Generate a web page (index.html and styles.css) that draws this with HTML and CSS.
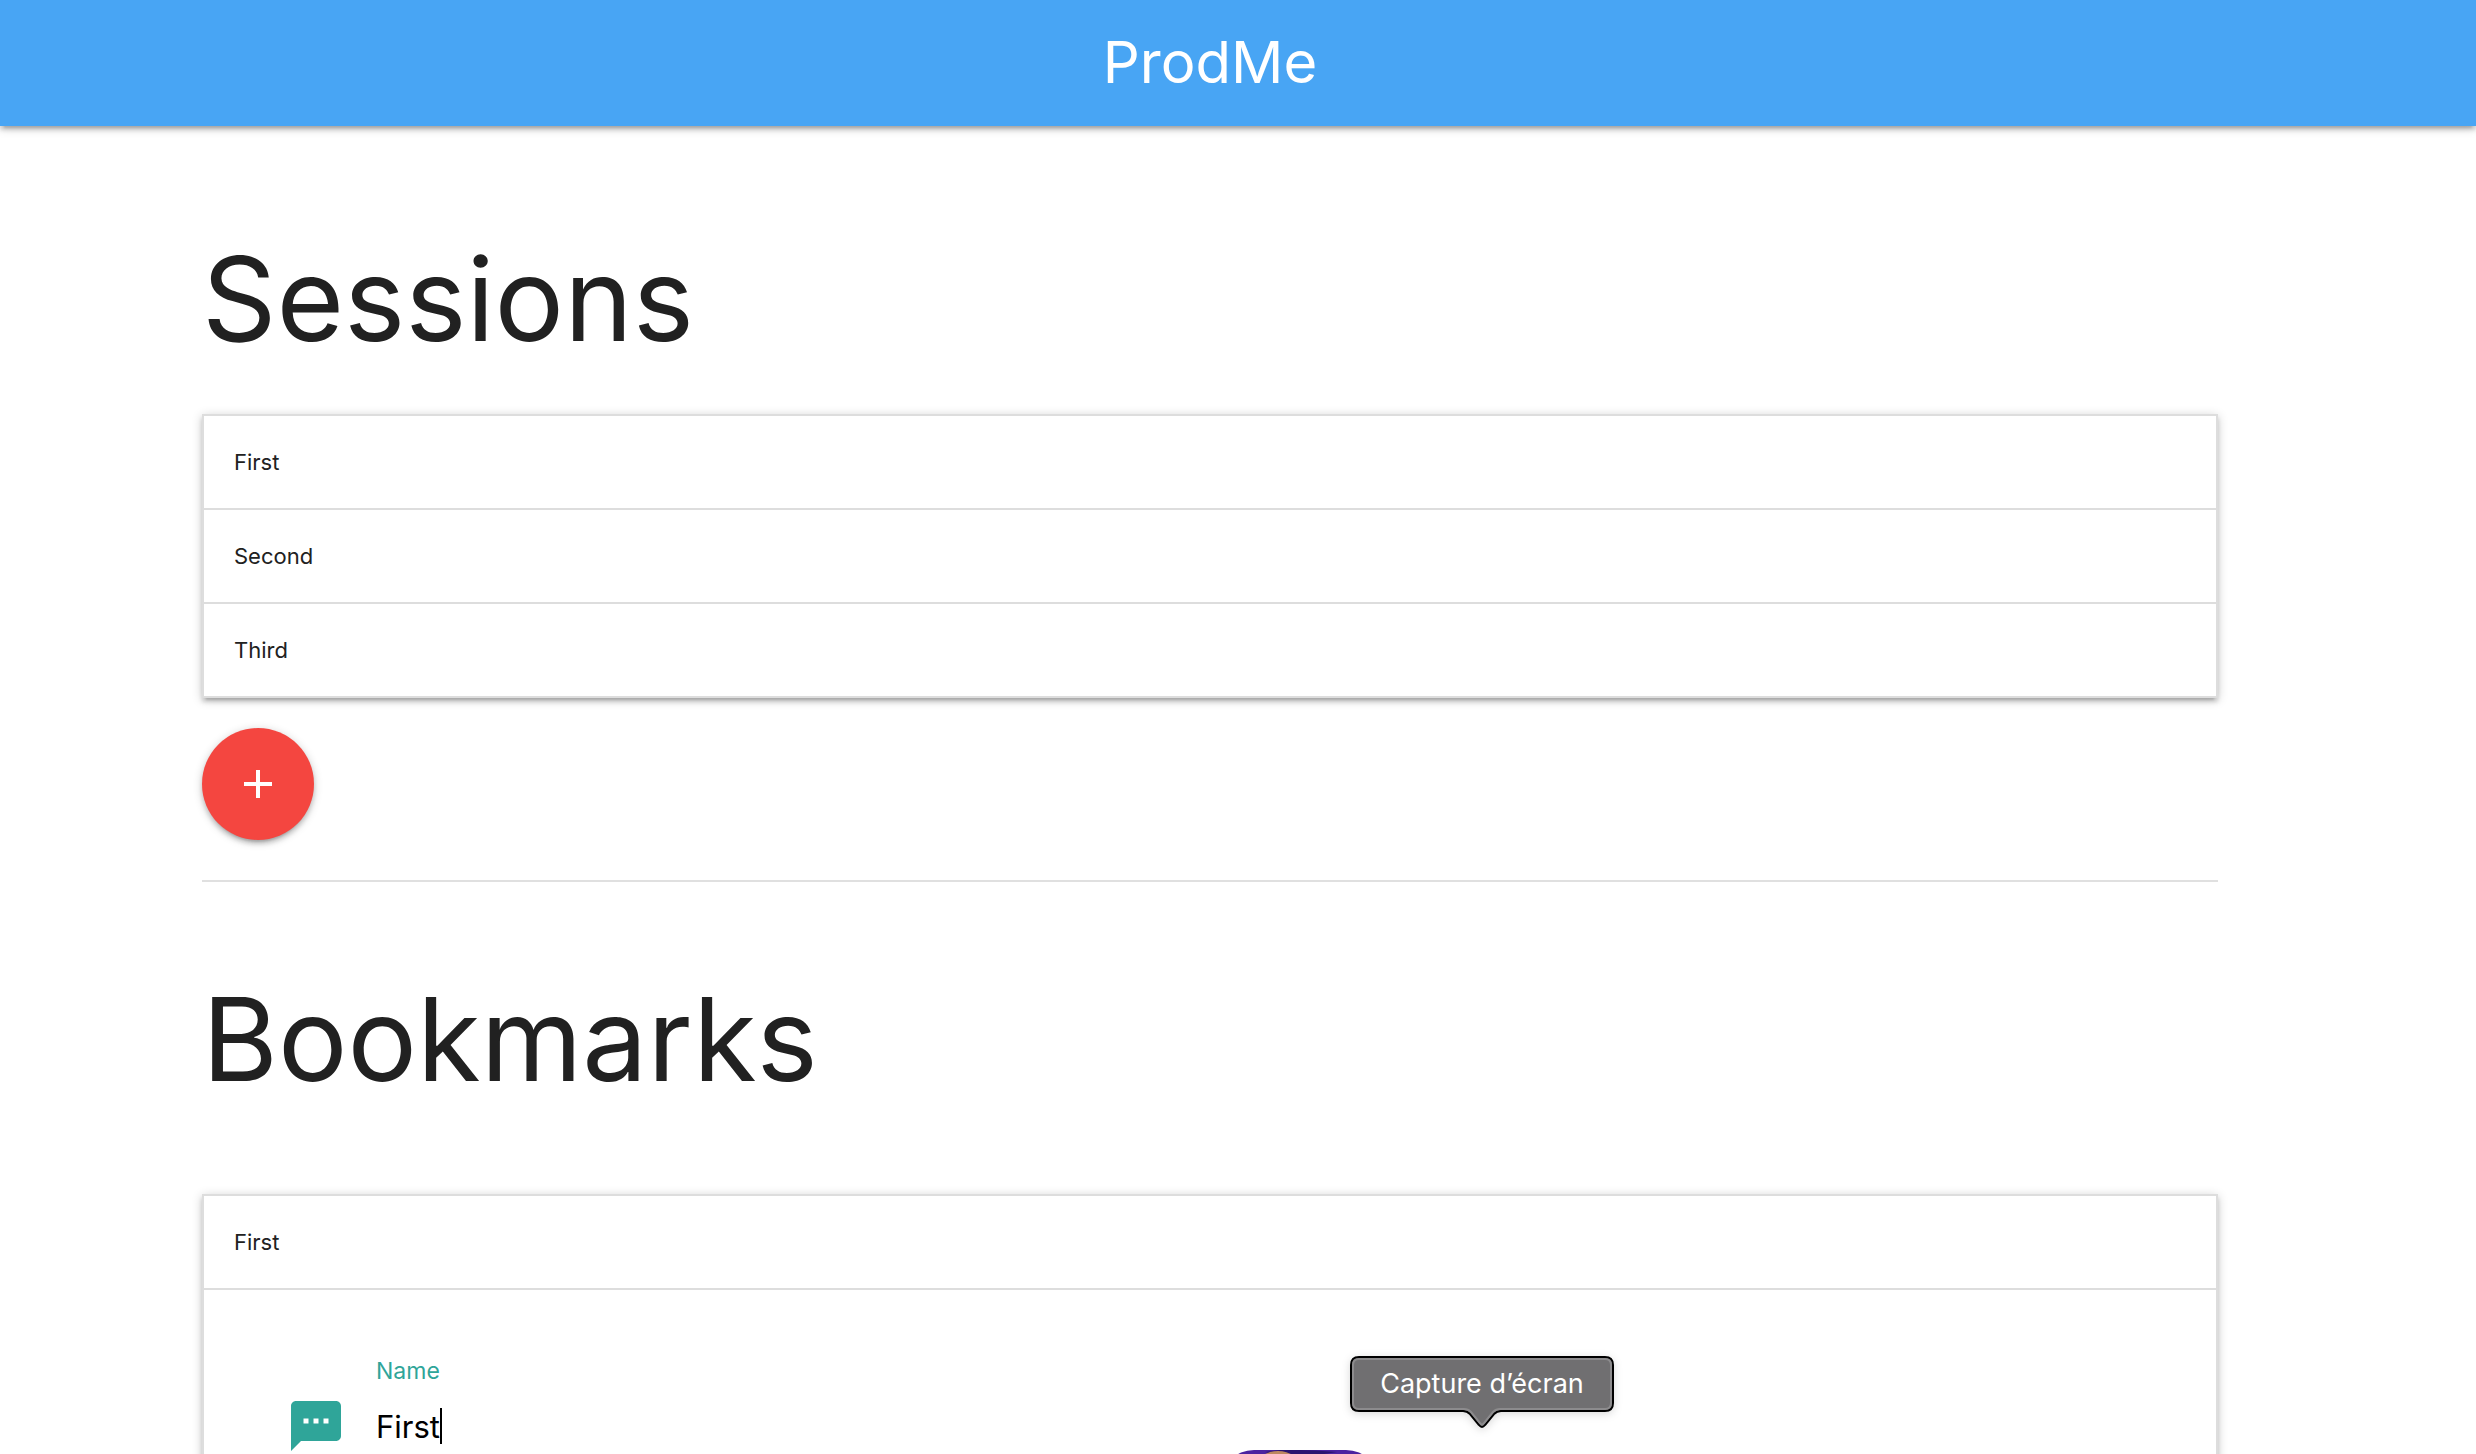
FILE: index.html
```html
<!DOCTYPE html>
<html lang="en">
<head>
<meta charset="utf-8">
<meta name="viewport" content="width=device-width, initial-scale=1">
<title>ProdMe</title>
<link rel="stylesheet" href="styles.css">
</head>
<body>
<header class="navbar"><a class="brand" href="#">ProdMe</a></header>
<main class="container">
  <section class="sessions">
    <h1 class="heading">Sessions</h1>
    <ul class="collapsible">
      <li class="item-header">First</li>
      <li class="item-header">Second</li>
      <li class="item-header">Third</li>
    </ul>
    <button class="add-button" type="button" aria-label="Add session">
      <svg class="add-icon" viewBox="0 0 24 24" aria-hidden="true"><path d="M19 13h-6v6h-2v-6H5v-2h6V5h2v6h6v2z"/></svg>
    </button>
  </section>
  <section class="bookmarks">
    <h1 class="heading">Bookmarks</h1>
    <div class="collapsible">
      <div class="item-header">First</div>
      <form class="item-body">
        <div class="field">
          <svg class="field-icon" viewBox="0 0 24 24" aria-hidden="true"><path d="M20 2H4c-1.100 0-1.990.9-1.990 2L2 22l4-4h14c1.100 0 2-.9 2-2V4c0-1.100-.9-2-2-2zM9 11H7V9h2v2zm4 0h-2V9h2v2zm4 0h-2V9h2v2z"/></svg>
          <label class="field-label" for="name">Name</label>
          <input class="field-input" id="name" type="text" value="First">
          <span class="caret"></span>
        </div>
      </form>
    </div>
  </section>
</main>
<div class="dock">
  <div class="tooltip" role="tooltip">
    <svg class="tooltip-shape" viewBox="0 0 264 72" aria-hidden="true">
      <path class="tooltip-edge" d="M9 1H255Q263 1 263 9V47Q263 55 255 55H151Q147 55 144 58L135 69Q132 73 129 69L120 58Q117 55 113 55H9Q1 55 1 47V9Q1 1 9 1Z"/>
      <path class="tooltip-rim" d="M9 3H255Q261 3 261 9V47Q261 53 255 53H150Q146 53 143 56L134 67Q132 70 130 67L121 56Q118 53 114 53H9Q3 53 3 47V9Q3 3 9 3Z"/>
    </svg>
    <span class="tooltip-text">Capture d’écran</span>
  </div>
  <svg class="app-icon" viewBox="0 0 160 160" aria-hidden="true">
    <rect width="160" height="160" rx="34" fill="#4b23a0"/>
    <path d="M45 2Q80 9 117 2Q93 0 80 0H60Z" fill="#2b1570"/>
    <ellipse cx="58" cy="16" rx="22" ry="15" fill="#bd8760"/>
  </svg>
</div>
</body>
</html>
```
FILE: styles.css
```css
* { box-sizing: border-box; }
html { height: 100%; scrollbar-width: none; }
body {
  position: relative;
  min-height: 100%;
  margin: 0;
  background: #fff;
  color: #212121;
  font-family: Inter, "Liberation Sans", sans-serif;
  font-size: 22px;
}
.navbar {
  display: flex;
  align-items: center;
  justify-content: center;
  height: 126px;
  padding-right: 56px;
  background: #48a5f4;
  box-shadow: 0 4px 4px rgba(0,0,0,.14), 0 6px 2px -4px rgba(0,0,0,.12), 0 2px 10px rgba(0,0,0,.2);
}
.brand { color: #fff; font-size: 58px; line-height: 68px; padding-bottom: 2px; text-decoration: none; }
.container { margin: 0 258px 0 202px; }
.heading {
  margin: 0;
  font-size: 116px;
  font-weight: 400;
  line-height: 138px;
}
.sessions { padding: 104px 0 40px; border-bottom: 2px solid #e0e0e0; }
.sessions .heading { margin-bottom: 46px; }
.bookmarks { padding-top: 88px; }
.bookmarks .heading { margin-bottom: 86px; }
.collapsible {
  margin: 0;
  padding: 0;
  list-style: none;
  border: 2px solid #ddd;
  border-bottom-width: 0;
  box-shadow: 0 4px 4px rgba(0,0,0,.14), 0 6px 2px -4px rgba(0,0,0,.12), 0 2px 10px rgba(0,0,0,.2);
}
.item-header {
  padding: 30px;
  border-bottom: 2px solid #ddd;
  line-height: 32px;
}
.add-button {
  display: flex;
  align-items: center;
  justify-content: center;
  width: 112px;
  height: 112px;
  margin-top: 30px;
  padding: 0;
  border: 0;
  border-radius: 50%;
  background: #f44640;
  box-shadow: 0 4px 4px rgba(0,0,0,.14), 0 6px 2px -4px rgba(0,0,0,.12), 0 2px 10px rgba(0,0,0,.2);
}
.add-icon { width: 48px; height: 48px; fill: #fff; }
.item-body { padding: 60px 82px; }
.field {
  display: grid;
  grid-template-columns: 90px auto 1fr;
  grid-template-rows: 42px 68px;
  align-items: center;
}
.field-icon { grid-row: 2; width: 60px; height: 60px; fill: #2fa599; }
.field-label { grid-column: 2 / 4; color: #2fa599; font-size: 23px; }
.field-input {
  grid-row: 2;
  grid-column: 2;
  field-sizing: content;
  padding: 0;
  border: 0;
  outline: 0;
  background: none;
  color: #000;
  font-family: inherit;
  font-size: 31px;
}
.caret { width: 2px; height: 36px; background: #000; }
.dock {
  position: absolute;
  top: 1356px;
  left: 1220px;
}
.tooltip { position: absolute; top: 0; left: 130px; width: 264px; height: 72px; }
.tooltip-shape { display: block; width: 264px; height: 72px; filter: drop-shadow(0 2px 4px rgba(0,0,0,.15)); }
.tooltip-edge { fill: #706f71; stroke: #000; stroke-width: 2; }
.tooltip-rim { fill: none; stroke: #8c8b8d; stroke-width: 2; }
.tooltip-text {
  position: absolute;
  inset: 0 0 16px;
  color: #fff;
  font-size: 27px;
  line-height: 56px;
  text-align: center;
  white-space: nowrap;
}
.app-icon { position: absolute; top: 94px; left: 0; width: 160px; height: 160px; }
```
